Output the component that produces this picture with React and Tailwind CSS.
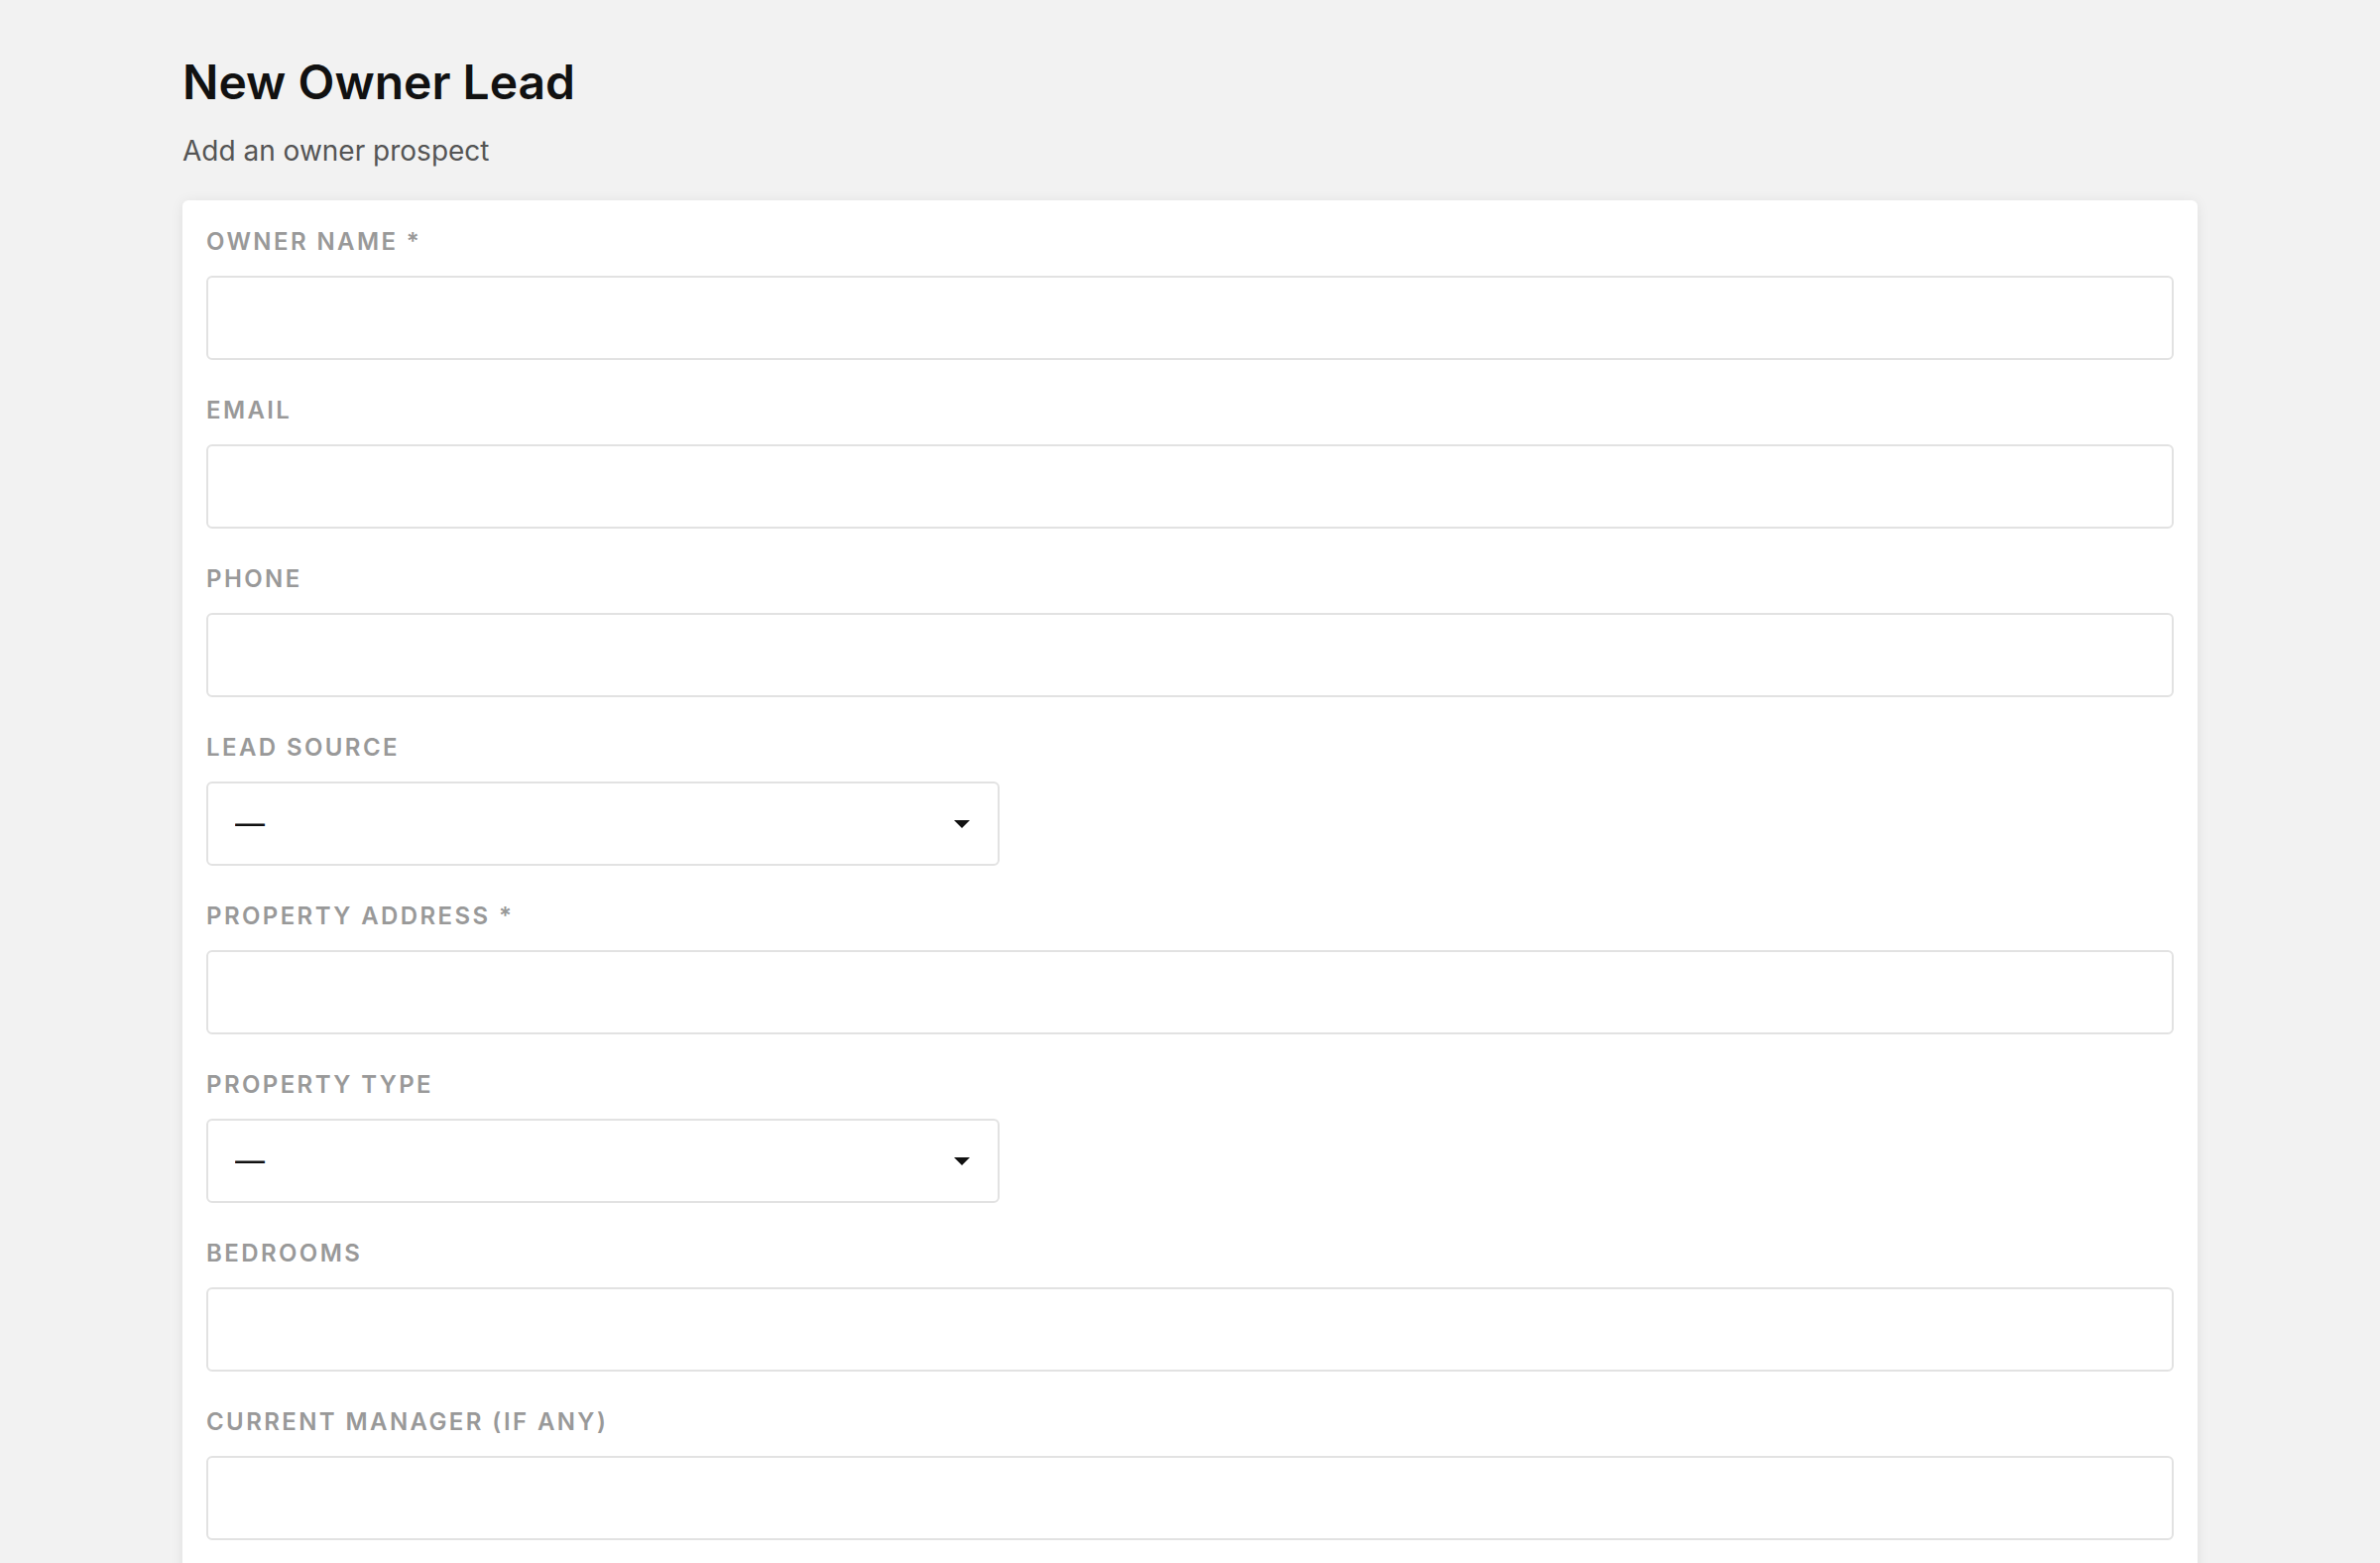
import React from "react";

const fields = [
  { label: "Owner Name *", type: "text" },
  { label: "Email", type: "email" },
  { label: "Phone", type: "tel" },
  { label: "Lead Source", type: "select" },
  { label: "Property Address *", type: "text" },
  { label: "Property Type", type: "select" },
  { label: "Bedrooms", type: "number" },
  { label: "Current Manager (If any)", type: "text" },
];

const Caret = () => (
  <svg
    width="16"
    height="8"
    viewBox="0 0 16 8"
    className="pointer-events-none absolute right-[30px] top-1/2 -translate-y-1/2"
  >
    <path d="M0 0 H16 L8 8 Z" fill="#111" />
  </svg>
);

const Field = ({ label, type }) => (
  <div className="pb-[36px]">
    <label className="block text-[24px] leading-[30px] font-semibold uppercase tracking-[0.1em] text-[#999] mb-[19px]">
      {label}
    </label>
    {type === "select" ? (
      <div className="relative w-[800px]">
        <select className="appearance-none w-full h-[85px] rounded-[6px] border-2 border-[#e2e2e2] bg-white pl-[27px] pr-[60px] text-[30px] text-[#111] outline-none">
          <option>—</option>
        </select>
        <Caret />
      </div>
    ) : (
      <input
        type={type}
        className="block w-full h-[85px] rounded-[6px] border-2 border-[#e2e2e2] bg-white px-[21px] text-[24px] text-[#111] outline-none"
      />
    )}
  </div>
);

export default function App() {
  return (
    <div className="min-h-screen bg-[#f2f2f2] px-[184px] pt-[54px] font-['Inter',sans-serif]">
      <h1 className="text-[48px] leading-[58px] font-semibold text-[#111]">
        New Owner Lead
      </h1>
      <p className="mt-[20px] text-[28px] leading-[40px] text-[#555]">
        Add an owner prospect
      </p>
      <div className="mt-[30px] rounded-[6px] bg-white px-[24px] pt-[27px] pb-[24px] shadow-[0_2px_14px_rgba(0,0,0,0.08)]">
        {fields.map((f) => (
          <Field key={f.label} {...f} />
        ))}
      </div>
    </div>
  );
}
